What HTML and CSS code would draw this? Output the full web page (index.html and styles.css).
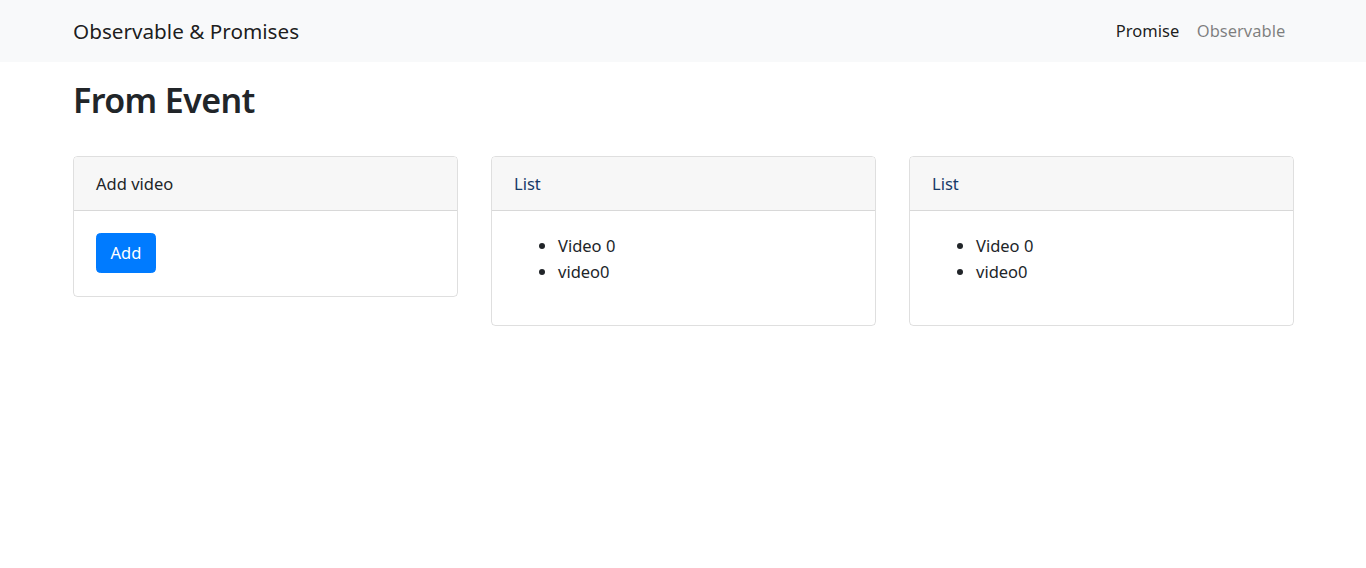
FILE: index.html
```html
<!DOCTYPE html>
<html lang="en">
<head>
<meta charset="utf-8">
<title>Observable &amp; Promises</title>
<link rel="stylesheet" href="styles.css">
</head>
<body>
<nav class="navbar">
  <a class="brand" href="#">Observable &amp; Promises</a>
  <ul class="nav">
    <li><a class="nav-link active" href="#">Promise</a></li>
    <li><a class="nav-link" href="#">Observable</a></li>
  </ul>
</nav>
<main class="main">
  <h1 class="title">From Event</h1>
  <div class="cards">
    <div class="card">
      <div class="card-header">Add video</div>
      <div class="card-body">
        <button class="btn">Add</button>
      </div>
    </div>
    <div class="card">
      <div class="card-header list-title">List</div>
      <div class="card-body">
        <ul class="list">
          <li>Video 0</li>
          <li>video0</li>
        </ul>
      </div>
    </div>
    <div class="card">
      <div class="card-header list-title">List</div>
      <div class="card-body">
        <ul class="list">
          <li>Video 0</li>
          <li>video0</li>
        </ul>
      </div>
    </div>
  </div>
</main>
</body>
</html>
```

FILE: styles.css
```css
* { box-sizing: border-box; }
html, body {
  margin: 0;
  padding: 0;
  background: #fff;
}
body {
  font-family: "Noto Sans", "Open Sans", sans-serif;
  font-size: 16.5px;
  line-height: 26.4px;
  color: #212529;
}
.navbar {
  height: 62px;
  background: #f8f9fa;
  display: flex;
  align-items: center;
  justify-content: space-between;
  padding: 0 72px 0 73px;
}
.brand {
  font-size: 20.7px;
  line-height: 33px;
  color: rgba(0, 0, 0, 0.9);
  text-decoration: none;
}
.nav {
  display: flex;
  list-style: none;
  margin: 0;
  padding: 0;
}
.nav-link {
  display: block;
  padding: 0 8.8px;
  color: rgba(0, 0, 0, 0.5);
  text-decoration: none;
}
.nav-link.active {
  color: rgba(0, 0, 0, 0.9);
}
.main {
  padding: 0 72px 0 73px;
}
.title {
  margin: 12px 0 29px;
  font-size: 34px;
  line-height: 53px;
  font-weight: 600;
  letter-spacing: -0.6px;
}
.cards {
  display: grid;
  grid-template-columns: repeat(3, 385px);
  column-gap: 33px;
  align-items: start;
}
.card {
  border: 1px solid rgba(0, 0, 0, 0.125);
  border-radius: 4.4px;
  overflow: hidden;
}
.card-header {
  background: #f7f7f7;
  border-bottom: 1px solid rgba(0, 0, 0, 0.125);
  padding: 13.6px 22px 12.8px;
}
.list-title {
  color: #163a68;
}
.card-body {
  padding: 22px 22px 23px;
}
.btn {
  font: inherit;
  height: 40px;
  width: 60px;
  padding: 0;
  line-height: 26px;
  color: #fff;
  background: #007bff;
  border: 1px solid #007bff;
  border-radius: 4.4px;
}
.list {
  margin: 0 0 16.6px;
  padding-left: 44px;
}
```
